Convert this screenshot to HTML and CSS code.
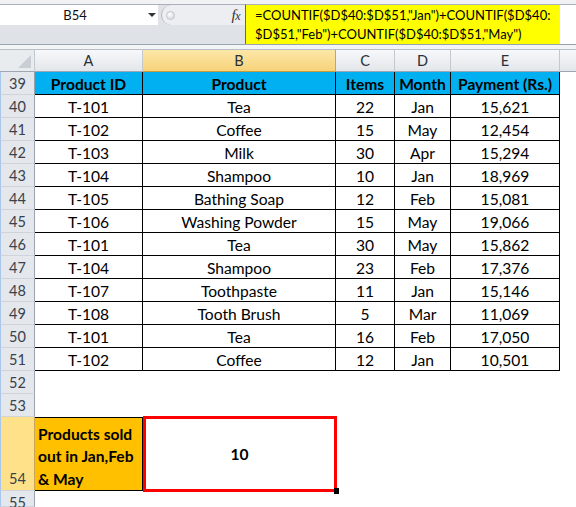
FILE: index.html
```html
<!DOCTYPE html>
<html>
<head>
<meta charset="utf-8">
<link rel="stylesheet" href="styles.css">
</head>
<body>
<div class="fbar">
  <div class="namecol">
    <div class="namebox"><span class="name">B54</span><span class="arrow"></span></div>
  </div>
  <div class="midcol">
    <div class="pill"><span class="knob"></span><span class="fx">f<span class="fxx">x</span></span></div>
  </div>
  <div class="formula">=COUNTIF($D$40:$D$51,"Jan")+COUNTIF($D$40:<br>$D$51,"Feb")+COUNTIF($D$40:$D$51,"May")</div>
  <div class="restcol"></div>
</div>
<div class="gap"></div>
<div class="sheet">
  <div class="corner"><span class="tri"></span></div>
  <div class="colh">A</div>
  <div class="colh sel">B</div>
  <div class="colh">C</div>
  <div class="colh">D</div>
  <div class="colh">E</div>
  <div class="colh last"></div>

  <div class="rowh">39</div>
  <div class="cell th">Product ID</div>
  <div class="cell th">Product</div>
  <div class="cell th">Items</div>
  <div class="cell th">Month</div>
  <div class="cell th">Payment (Rs.)</div>
  <div class="blank"></div>

  <div class="rowh">40</div><div class="cell">T-101</div><div class="cell">Tea</div><div class="cell">22</div><div class="cell">Jan</div><div class="cell">15,621</div><div class="blank"></div>
  <div class="rowh">41</div><div class="cell">T-102</div><div class="cell">Coffee</div><div class="cell">15</div><div class="cell">May</div><div class="cell">12,454</div><div class="blank"></div>
  <div class="rowh">42</div><div class="cell">T-103</div><div class="cell">Milk</div><div class="cell">30</div><div class="cell">Apr</div><div class="cell">15,294</div><div class="blank"></div>
  <div class="rowh">43</div><div class="cell">T-104</div><div class="cell">Shampoo</div><div class="cell">10</div><div class="cell">Jan</div><div class="cell">18,969</div><div class="blank"></div>
  <div class="rowh">44</div><div class="cell">T-105</div><div class="cell">Bathing Soap</div><div class="cell">12</div><div class="cell">Feb</div><div class="cell">15,081</div><div class="blank"></div>
  <div class="rowh">45</div><div class="cell">T-106</div><div class="cell">Washing Powder</div><div class="cell">15</div><div class="cell">May</div><div class="cell">19,066</div><div class="blank"></div>
  <div class="rowh">46</div><div class="cell">T-101</div><div class="cell">Tea</div><div class="cell">30</div><div class="cell">May</div><div class="cell">15,862</div><div class="blank"></div>
  <div class="rowh">47</div><div class="cell">T-104</div><div class="cell">Shampoo</div><div class="cell">23</div><div class="cell">Feb</div><div class="cell">17,376</div><div class="blank"></div>
  <div class="rowh">48</div><div class="cell">T-107</div><div class="cell">Toothpaste</div><div class="cell">11</div><div class="cell">Jan</div><div class="cell">15,146</div><div class="blank"></div>
  <div class="rowh">49</div><div class="cell">T-108</div><div class="cell">Tooth Brush</div><div class="cell">5</div><div class="cell">Mar</div><div class="cell">11,069</div><div class="blank"></div>
  <div class="rowh">50</div><div class="cell">T-101</div><div class="cell">Tea</div><div class="cell">16</div><div class="cell">Feb</div><div class="cell">17,050</div><div class="blank"></div>
  <div class="rowh">51</div><div class="cell">T-102</div><div class="cell">Coffee</div><div class="cell">12</div><div class="cell">Jan</div><div class="cell">10,501</div><div class="blank"></div>

  <div class="rowh">52</div><div class="blank"></div><div class="blank"></div><div class="blank"></div><div class="blank"></div><div class="blank"></div><div class="blank"></div>
  <div class="rowh">53</div><div class="blank"></div><div class="blank"></div><div class="blank"></div><div class="blank"></div><div class="blank"></div><div class="blank"></div>

  <div class="rowh tall sel">54</div>
  <div class="label">Products sold out in Jan,Feb &amp; May</div>
  <div class="result">10<span class="selbox"><span class="handle"></span></span></div>
  <div class="blank"></div><div class="blank"></div><div class="blank"></div><div class="blank"></div>

  <div class="rowh">55</div><div class="blank"></div><div class="blank"></div><div class="blank"></div><div class="blank"></div><div class="blank"></div><div class="blank"></div>
</div>
</body>
</html>
```
FILE: styles.css
```css
* { box-sizing: border-box; }
html, body { margin: 0; padding: 0; }
body {
  width: 576px;
  height: 507px;
  overflow: hidden;
  background: #ffffff;
  font-family: Lato, "Open Sans", sans-serif;
  color: #000;
}

/* ---------- formula bar ---------- */
.fbar {
  display: flex;
  height: 45px;
  padding-top: 4px;
  background: #f1f2f4;
  border-bottom: 1px solid #9aa3ae;
}
.namecol {
  width: 158px;
  height: 40px;
  background: #dfe3e8;
  border-top: 1px solid #a9b0b9;
}
.namebox {
  height: 20px;
  background: #ffffff;
  display: flex;
  align-items: center;
}
.name {
  flex: 1;
  text-align: center;
  font-size: 13px;
  color: #111;
  padding-left: 2px;
}
.arrow {
  width: 0;
  height: 0;
  border-left: 4px solid transparent;
  border-right: 4px solid transparent;
  border-top: 4px solid #333;
  margin-right: 2px;
}
.midcol {
  width: 87px;
  height: 40px;
  background: #dfe3e8;
  border-top: 1px solid #a9b0b9;
}
.pill {
  height: 20px;
  margin-left: 3px;
  background: #eceef1;
  border-radius: 10px 0 0 10px;
  border-left: 1px solid #b3b9c1;
  display: flex;
  align-items: center;
}
.knob {
  width: 9px;
  height: 9px;
  border-radius: 50%;
  background: radial-gradient(circle at 40% 35%, #ffffff, #c9ced5);
  border: 1px solid #c2c7ce;
  margin-left: 4px;
}
.fx {
  margin-left: auto;
  margin-right: 5px;
  font-family: "Liberation Serif", "DejaVu Serif", serif;
  font-style: italic;
  font-size: 15px;
  color: #333;
  letter-spacing: -0.5px;
}
.fxx { font-size: 12px; }
.formula {
  width: 315px;
  height: 40px;
  background: #ffff00;
  border-top: 1px solid #a9b0b9;
  border-left: 1px solid #70702a;
  padding-left: 9px;
  padding-top: 1px;
  font-size: 13px;
  line-height: 19px;
  color: #000;
  white-space: nowrap;
  overflow: hidden;
}
.restcol {
  flex: 1;
  height: 40px;
  background: #ffffff;
  border-top: 1px solid #a9b0b9;
}
.gap {
  height: 4px;
  background: #f3f4f6;
}

/* ---------- sheet ---------- */
.sheet {
  display: grid;
  grid-template-columns: 35px 108px 193px 59px 56px 109px 16px;
  grid-template-rows: repeat(16, 23px) 74px 16px;
}
.corner {
  background: #e9ecef;
  border-top: 1px solid #b7bec7;
  border-right: 1px solid #c3c9d1;
  border-bottom: 1px solid #9ea7b1;
  position: relative;
}
.tri {
  position: absolute;
  right: 3px;
  bottom: 3px;
  width: 0;
  height: 0;
  border-left: 13px solid transparent;
  border-bottom: 13px solid #c9ced5;
}
.colh {
  background: linear-gradient(#f7f8fa, #e3e6ea);
  border-top: 1px solid #b7bec7;
  border-right: 1px solid #c3c9d1;
  border-bottom: 1px solid #9ea7b1;
  text-align: center;
  font-size: 14.5px;
  line-height: 21px;
  color: #27303b;
}
.colh.sel {
  background: linear-gradient(#fce7a8, #f8d27a);
  border-bottom-color: #c79a3a;
  border-right-color: #c9a45a;
}
.colh.last { border-right: none; }
.rowh {
  background: #e4e7eb;
  border-left: 1px solid #a7c6ea;
  border-right: 1px solid #9aa4b0;
  border-bottom: 1px solid #cfd4db;
  text-align: center;
  font-size: 14.5px;
  padding-top: 2px;
  line-height: 20px;
  color: #39414c;
}
.rowh.sel {
  background: #ffe18a;
  border-right-color: #c9a45a;
}
.rowh.tall {
  display: flex;
  align-items: flex-end;
  justify-content: center;
  padding-top: 0;
  padding-bottom: 1px;
}
.cell {
  border-right: 1px solid #000;
  border-bottom: 1px solid #000;
  text-align: center;
  font-size: 15.6px;
  padding-top: 2px;
  line-height: 20px;
  white-space: nowrap;
  overflow: hidden;
}
.cell.th {
  background: #00b0f0;
  font-weight: 700;
}
.blank { background: #ffffff; }
.label {
  background: #ffc000;
  border-top: 1px solid #000;
  border-right: 1px solid #000;
  border-bottom: 1px solid #000;
  font-size: 15.6px;
  font-weight: 700;
  line-height: 22.5px;
  padding: 0 2px 0 3px;
  display: flex;
  align-items: flex-end;
}
.result {
  position: relative;
  display: flex;
  align-items: center;
  justify-content: center;
  font-size: 15.6px;
  font-weight: 700;
}
.selbox {
  position: absolute;
  left: 0;
  top: -1px;
  right: -1px;
  bottom: -1px;
  border: 3px solid #ff0000;
}
.handle {
  position: absolute;
  right: -5px;
  bottom: -5px;
  width: 5px;
  height: 6px;
  background: #000;
}
```
